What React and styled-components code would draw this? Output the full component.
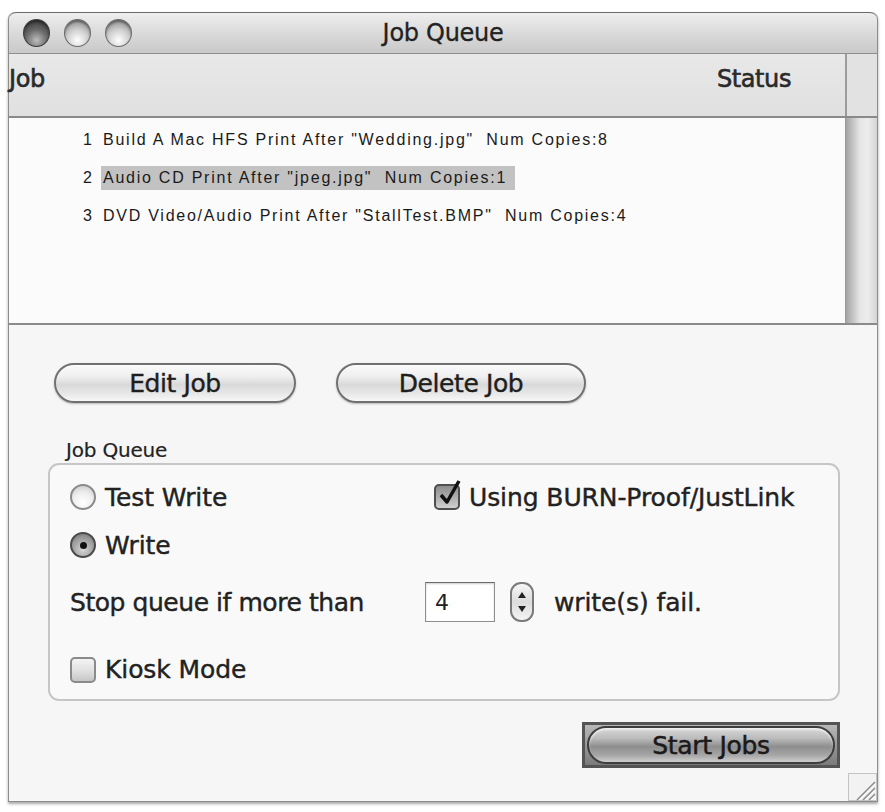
import React from 'react';
import styled, { createGlobalStyle } from 'styled-components';

const GlobalStyle = createGlobalStyle`
  html, body {
    margin: 0;
    padding: 0;
    background: #ffffff;
  }
  body {
    font-family: "DejaVu Sans", "Liberation Sans", sans-serif;
    color: #1e1e1e;
  }
`;

const Page = styled.div`
  padding: 12px 9px 8px 8px;
`;

const Window = styled.div`
  position: relative;
  width: 868px;
  border: 1px solid #8c8c8c;
  border-top: none;
  border-radius: 7px 7px 0 0;
  background: #f6f6f6;
  box-shadow: 0 2px 3px rgba(0, 0, 0, 0.35);
`;

const TitleBar = styled.div`
  display: grid;
  grid-template-columns: 1fr auto 1fr;
  align-items: center;
  height: 40px;
  border-radius: 7px 7px 0 0;
  border-top: 1px solid #6a6a6a;
  border-bottom: 1px solid #8e8e8e;
  background: linear-gradient(#eeeeee, #dcdcdc 45%, #c9c9c9);
`;

const Lights = styled.div`
  display: flex;
  gap: 14px;
  padding-left: 14px;
`;

const Light = styled.span`
  width: 27px;
  height: 28px;
  border-radius: 50%;
  box-sizing: border-box;
  border: 1.5px solid ${({ dark }) => (dark ? '#3c3c3c' : '#6c6c6c')};
  background: ${({ dark }) =>
    dark
      ? 'radial-gradient(circle at 50% 78%, #bdbdbd, #6a6a6a 45%, #3e3e3e 80%)'
      : 'radial-gradient(circle at 50% 78%, #ffffff, #cfcfcf 45%, #8e8e8e 85%)'};
  box-shadow: inset 0 2px 2px rgba(0, 0, 0, 0.35);
`;

const Title = styled.div`
  font-size: 24px;
  color: #222;
  letter-spacing: -0.3px;
  -webkit-text-stroke: 0.3px #222;
`;

const HeaderRow = styled.div`
  display: grid;
  grid-template-columns: 1fr 32px;
  height: 62px;
  background: linear-gradient(#e8e8e8, #e0e0e0);
  border-bottom: 2px solid #8a8a8a;
`;

const HeaderCell = styled.div`
  display: flex;
  justify-content: space-between;
  align-items: center;
  padding: 0 54px 12px 0;
  font-size: 24px;
  color: #2a2a2a;
  letter-spacing: -0.4px;
  -webkit-text-stroke: 0.6px #2a2a2a;
`;

const CornerCell = styled.div`
  border-left: 2px solid #9c9c9c;
  background: #e2e2e2;
`;

const ListArea = styled.div`
  display: grid;
  grid-template-columns: 1fr 32px;
  height: 205px;
  border-bottom: 2px solid #8a8a8a;
`;

const List = styled.div`
  background: #fbfbfb;
  padding-top: 3px;
`;

const Row = styled.div`
  display: flex;
  align-items: center;
  height: 38px;
  padding-left: 74px;
  font-family: "Liberation Sans", Arial, sans-serif;
  font-size: 16px;
  letter-spacing: 1.75px;
  color: #1a1a1a;
`;

const ItemNum = styled.span`
  width: 20px;
`;

const ItemText = styled.span`
  padding: 3px 8px 3px 2px;
  margin-left: -2px;
  background: ${({ selected }) => (selected ? '#c2c2c2' : 'transparent')};
  white-space: pre;
`;

const ScrollTrack = styled.div`
  border-left: 1px solid #9a9a9a;
  background: linear-gradient(to right, #a4a4a4, #c8c8c8 25%, #e6e6e6 45%, #ececec 70%, #d6d6d6);
`;

const Panel = styled.div`
  padding: 38px 37px 33px 39px;
`;

const ButtonRow = styled.div`
  display: flex;
  gap: 40px;
  padding-left: 6px;
`;

const PillButton = styled.button`
  width: ${({ w }) => w}px;
  height: 40px;
  border-radius: 20px;
  border: 2px solid #707070;
  background: linear-gradient(#fafafa, #f0f0f0 30%, #d9d9d9 55%, #e8e8e8 80%, #f7f7f7);
  box-shadow: inset 0 1px 1px rgba(255, 255, 255, 0.9), 0 1px 2px rgba(0, 0, 0, 0.25);
  font-family: "DejaVu Sans", "Liberation Sans", sans-serif;
  font-size: 25px;
  color: #1e1e1e;
  letter-spacing: -0.4px;
  -webkit-text-stroke: 0.4px #1e1e1e;
  padding: 0;
`;

const GroupLabel = styled.div`
  margin-top: 36px;
  padding-left: 18px;
  font-size: 20px;
  line-height: 23px;
  color: #222;
  letter-spacing: -0.2px;
  -webkit-text-stroke: 0.2px #222;
`;

const GroupBox = styled.div`
  margin-top: 1px;
  height: 238px;
  box-sizing: border-box;
  border: 2px solid #c6c6c6;
  border-radius: 11px;
  background: #f9f9f9;
  padding: 8px 20px 0 20px;
  font-size: 25px;
  letter-spacing: -0.1px;
  color: #222;
  -webkit-text-stroke: 0.4px #222;
`;

const OptionGrid = styled.div`
  display: grid;
  grid-template-columns: 364px 1fr;
  grid-auto-rows: 48px;
  align-items: center;
`;

const Option = styled.label`
  display: flex;
  align-items: center;
  gap: 9px;
`;

const Radio = styled.span`
  display: inline-flex;
  align-items: center;
  justify-content: center;
  width: 26px;
  height: 26px;
  box-sizing: border-box;
  border-radius: 50%;
  border: 2px solid ${({ checked }) => (checked ? '#4a4a4a' : '#8a8a8a')};
  background: ${({ checked }) =>
    checked
      ? 'radial-gradient(circle at 50% 70%, #d8d8d8, #9a9a9a 60%, #6e6e6e)'
      : 'radial-gradient(circle at 50% 75%, #ffffff, #eeeeee 50%, #c4c4c4)'};
  -webkit-text-stroke: 0;

  &::after {
    content: '';
    display: ${({ checked }) => (checked ? 'block' : 'none')};
    width: 7px;
    height: 7px;
    border-radius: 50%;
    background: #111;
  }
`;

const Check = styled.span`
  position: relative;
  display: inline-block;
  width: 26px;
  height: 26px;
  box-sizing: border-box;
  border-radius: 5px;
  border: 2px solid ${({ checked }) => (checked ? '#4e4e4e' : '#8a8a8a')};
  background: ${({ checked }) =>
    checked
      ? 'linear-gradient(#8c8c8c, #b4b4b4 60%, #d0d0d0)'
      : 'linear-gradient(#f4f4f4, #e2e2e2 50%, #c6c6c6)'};

  svg {
    position: absolute;
    left: 2px;
    top: -8px;
  }
`;

const StopRow = styled.div`
  display: flex;
  align-items: center;
  margin-top: 13px;
  height: 40px;
`;

const StopLabel = styled.span`
  width: 355px;
  letter-spacing: -0.45px;
`;

const NumberBox = styled.div`
  display: flex;
  align-items: center;
  width: 70px;
  height: 40px;
  box-sizing: border-box;
  padding-left: 9px;
  border: 1px solid #8e8e8e;
  border-top-color: #6c6c6c;
  background: #ffffff;
  box-shadow: inset 0 1px 2px rgba(0, 0, 0, 0.2);
  font-size: 22px;
  -webkit-text-stroke: 0;
`;

const Stepper = styled.div`
  display: flex;
  flex-direction: column;
  align-items: center;
  justify-content: space-between;
  width: 24px;
  height: 40px;
  box-sizing: border-box;
  margin-left: 15px;
  padding: 8px 0;
  border: 2px solid #7a7a7a;
  border-radius: 11px;
  background: linear-gradient(#f6f6f6, #dcdcdc 50%, #f4f4f4);
`;

const Arrow = styled.span`
  width: 0;
  height: 0;
  border-left: 4px solid transparent;
  border-right: 4px solid transparent;
  ${({ up }) => (up ? 'border-bottom: 6px solid #222;' : 'border-top: 6px solid #222;')}
`;

const FailLabel = styled.span`
  margin-left: 20px;
`;

const KioskRow = styled.div`
  margin-top: 33px;
`;

const FooterRow = styled.div`
  display: flex;
  justify-content: flex-end;
  margin-top: 21px;
`;

const DefaultFrame = styled.div`
  padding: 1px 2px;
  border: 3px solid #545454;
  background: linear-gradient(#b8b8b8, #7a7a7a);
`;

const DefaultButton = styled.button`
  display: block;
  width: 248px;
  height: 38px;
  border-radius: 19px;
  border: 2px solid #3e3e3e;
  background: linear-gradient(#d8d8d8, #bcbcbc 30%, #8e8e8e 55%, #a6a6a6 80%, #cfcfcf);
  box-shadow: inset 0 2px 2px rgba(255, 255, 255, 0.6);
  font-family: "DejaVu Sans", "Liberation Sans", sans-serif;
  font-size: 25px;
  color: #1a1a1a;
  letter-spacing: -0.3px;
  -webkit-text-stroke: 0.5px #1a1a1a;
  padding: 0;
`;

const Grip = styled.svg`
  position: absolute;
  right: 0;
  bottom: 0;
`;

const jobs = [
  { n: 1, text: 'Build A Mac HFS Print After "Wedding.jpg"  Num Copies:8' },
  { n: 2, text: 'Audio CD Print After "jpeg.jpg"  Num Copies:1', selected: true },
  { n: 3, text: 'DVD Video/Audio Print After "StallTest.BMP"  Num Copies:4' },
];

function CheckMark() {
  return (
    <svg width="24" height="30" viewBox="0 0 24 30">
      <path d="M3 17 L9 24 L21 3" fill="none" stroke="#111" strokeWidth="3.5" strokeLinejoin="round" />
    </svg>
  );
}

export default function App() {
  return (
    <>
      <GlobalStyle />
      <Page>
        <Window>
          <TitleBar>
            <Lights>
              <Light dark />
              <Light />
              <Light />
            </Lights>
            <Title>Job Queue</Title>
            <span />
          </TitleBar>

          <HeaderRow>
            <HeaderCell>
              <span>Job</span>
              <span>Status</span>
            </HeaderCell>
            <CornerCell />
          </HeaderRow>

          <ListArea>
            <List>
              {jobs.map((job) => (
                <Row key={job.n}>
                  <ItemNum>{job.n}</ItemNum>
                  <ItemText selected={job.selected}>{job.text}</ItemText>
                </Row>
              ))}
            </List>
            <ScrollTrack />
          </ListArea>

          <Panel>
            <ButtonRow>
              <PillButton w={242}>Edit Job</PillButton>
              <PillButton w={250}>Delete Job</PillButton>
            </ButtonRow>

            <GroupLabel>Job Queue</GroupLabel>
            <GroupBox>
              <OptionGrid>
                <Option>
                  <Radio />
                  Test Write
                </Option>
                <Option>
                  <Check checked>
                    <CheckMark />
                  </Check>
                  Using BURN-Proof/JustLink
                </Option>
                <Option>
                  <Radio checked />
                  Write
                </Option>
              </OptionGrid>

              <StopRow>
                <StopLabel>Stop queue if more than</StopLabel>
                <NumberBox>4</NumberBox>
                <Stepper>
                  <Arrow up />
                  <Arrow />
                </Stepper>
                <FailLabel>write(s) fail.</FailLabel>
              </StopRow>

              <KioskRow>
                <Option>
                  <Check />
                  Kiosk Mode
                </Option>
              </KioskRow>
            </GroupBox>

            <FooterRow>
              <DefaultFrame>
                <DefaultButton>Start Jobs</DefaultButton>
              </DefaultFrame>
            </FooterRow>
          </Panel>

          <Grip width="29" height="28" viewBox="0 0 29 28">
            <rect x="0.5" y="0.5" width="28" height="27" fill="#f2f2f2" stroke="#c4c4c4" />
            <path d="M27 9 L9 27 M27 15 L15 27 M27 21 L21 27" stroke="#8a8a8a" strokeWidth="1.5" />
            <path d="M27 11 L11 27 M27 17 L17 27 M27 23 L23 27" stroke="#ffffff" strokeWidth="1" />
          </Grip>
        </Window>
      </Page>
    </>
  );
}
